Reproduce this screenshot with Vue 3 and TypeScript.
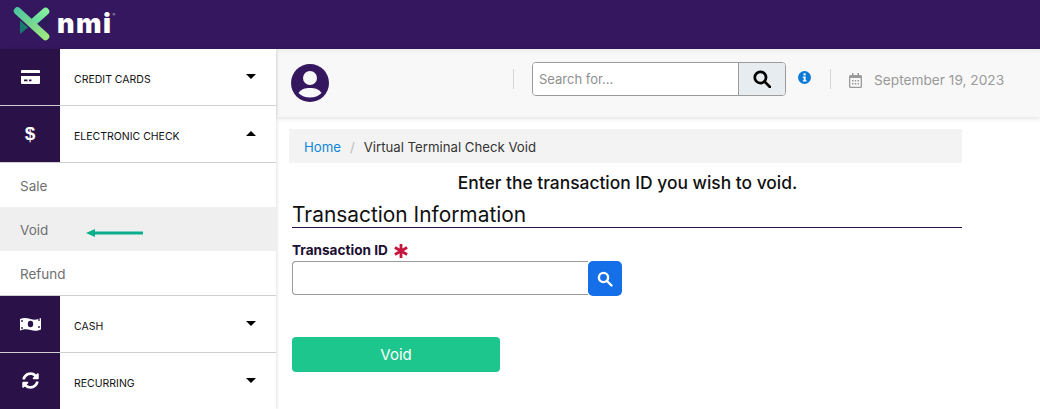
<script setup lang="ts">
interface NavGroup {
  label: string
  icon: 'card' | 'dollar' | 'cash' | 'sync'
  open?: boolean
  links?: string[]
}

const groups: NavGroup[] = [
  { label: 'CREDIT CARDS', icon: 'card' },
  { label: 'ELECTRONIC CHECK', icon: 'dollar', open: true, links: ['Sale', 'Void', 'Refund'] },
  { label: 'CASH', icon: 'cash' },
  { label: 'RECURRING', icon: 'sync' }
]
</script>

<template>
  <div class="page">
    <header class="topbar">
      <svg class="logo" width="37" height="34" viewBox="0 0 37 34">
        <defs>
          <linearGradient id="logoBar" x1="0" y1="0" x2="0" y2="1">
            <stop offset="0" stop-color="#45c2a3" />
            <stop offset="1" stop-color="#c4ec78" />
          </linearGradient>
          <linearGradient id="logoA" x1="0" y1="0" x2="37" y2="34" gradientUnits="userSpaceOnUse">
            <stop offset="0" stop-color="#45c2a3" />
            <stop offset="1" stop-color="#a8ec7e" />
          </linearGradient>
          <linearGradient id="logoB" x1="36" y1="2" x2="20" y2="18" gradientUnits="userSpaceOnUse">
            <stop offset="0" stop-color="#8cf59c" />
            <stop offset="1" stop-color="#5ed6a0" />
          </linearGradient>
        </defs>
        <path d="M32.500 4.500 L20 15.500" stroke="url(#logoB)" stroke-width="7.500" stroke-linecap="round" />
        <path d="M4.500 4 L32.500 29.500" stroke="url(#logoA)" stroke-width="7.500" stroke-linecap="round" />
        <path d="M3.500 4.500 V29.500" stroke="url(#logoBar)" stroke-width="7" stroke-linecap="round" />
        <path d="M7 13.500 15 20.500 7 27Z" fill="#177a6c" />
        <path d="M27 16 36 10V22.500Z" fill="#2b1a57" />
      </svg>
      <span class="wordmark">nmi</span>
      <sup class="reg">®</sup>
    </header>

    <div class="body">
      <nav class="sidebar">
        <template v-for="group in groups" :key="group.label">
          <div class="group">
            <div class="group-icon">
              <svg v-if="group.icon === 'card'" width="19" height="14" viewBox="0 0 19 14" fill="#fff">
                <path d="M1 0h17a1 1 0 0 1 1 1v2H0V1a1 1 0 0 1 1-1Z" />
                <path fill-rule="evenodd" d="M0 6h19v7a1 1 0 0 1-1 1H1a1 1 0 0 1-1-1Zm3 3.500v1.800h3.500V9.500Zm5 0v1.800h2.500V9.500Z" />
              </svg>
              <span v-else-if="group.icon === 'dollar'" class="dollar">$</span>
              <svg v-else-if="group.icon === 'cash'" width="21" height="14" viewBox="0 0 21 14">
                <path d="M0 2C4 .5 7 1 10.500 2s6.500 1 10.500-1v11.500c-4 1.800-7 1.500-10.500.5S4 12 0 13.500Z" fill="#fff" />
                <ellipse cx="10.500" cy="7" rx="2.700" ry="3.300" fill="#2a1248" />
                <circle cx="2" cy="4" r="0.900" fill="#2a1248" />
                <circle cx="19" cy="3" r="0.900" fill="#2a1248" />
                <circle cx="2" cy="11" r="0.900" fill="#2a1248" />
                <circle cx="19" cy="10" r="0.900" fill="#2a1248" />
              </svg>
              <svg v-else width="17" height="17" viewBox="0 0 512 512" fill="#fff">
                <path d="M370.720 133.280C339.458 104.008 298.888 87.962 255.848 88c-77.458.068-144.328 53.178-162.791 126.850-1.344 5.363-6.122 9.150-11.651 9.150H24.103c-7.498 0-13.194-6.807-11.807-14.176C33.933 94.924 134.813 8 256 8c66.448 0 126.791 26.136 171.315 68.685L463.030 40.970C478.149 25.851 504 36.559 504 57.941V192c0 13.255-10.745 24-24 24H345.941c-21.382 0-32.090-25.851-16.971-40.971l41.750-41.749zM32 296h134.059c21.382 0 32.090 25.851 16.971 40.971l-41.750 41.750c31.262 29.273 71.835 45.319 114.876 45.280 77.418-.070 144.315-53.144 162.787-126.849 1.344-5.363 6.122-9.150 11.651-9.150h57.304c7.498 0 13.194 6.807 11.807 14.176C478.067 417.076 377.187 504 256 504c-66.448 0-126.791-26.136-171.315-68.685L48.970 471.030C33.851 486.149 8 475.441 8 454.059V320c0-13.255 10.745-24 24-24z" />
              </svg>
            </div>
            <span class="group-label">{{ group.label }}</span>
            <span class="caret" :class="{ up: group.open }"></span>
          </div>
          <div v-if="group.links" class="links">
            <a v-for="link in group.links" :key="link" class="link" :class="{ active: link === 'Void' }">
              {{ link }}
              <svg v-if="link === 'Void'" class="arrow" width="57" height="8" viewBox="0 0 57 8">
                <path d="M0 4 9 0v2.500h48v3H9V8Z" fill="#0aae8c" />
              </svg>
            </a>
          </div>
        </template>
      </nav>

      <main class="main">
        <div class="toolbar">
          <svg class="avatar" width="38" height="38" viewBox="0 0 38 38">
            <circle cx="19" cy="19" r="19" fill="#35175f" />
            <circle cx="19" cy="14" r="7" fill="#f8f8f8" />
            <path d="M7.500 29C10 25 14 24 19 24s9 1 11.500 5C27.500 32 23.500 33.500 19 33.500S10.500 32 7.500 29Z" fill="#f8f8f8" />
          </svg>
          <div class="tools">
            <div class="divider first"></div>
            <div class="search">
              <input class="search-input" type="text" placeholder="Search for..." />
              <button class="search-btn" type="button">
                <svg width="18" height="18" viewBox="0 0 17 17" fill="none" stroke="#000" stroke-width="2.600">
                  <circle cx="7" cy="7" r="5.300" />
                  <path d="M11 11l5 5" stroke-linecap="round" />
                </svg>
              </button>
            </div>
            <svg class="info" width="13" height="13" viewBox="0 0 14 14">
              <circle cx="7" cy="7" r="7" fill="#0d79d6" />
              <rect x="6" y="2.500" width="2.200" height="2.200" fill="#fff" />
              <path d="M5.200 6h3v4h1v1.300H5.200V10h1V7.300h-1Z" fill="#fff" />
            </svg>
            <div class="divider last"></div>
            <svg class="calendar" width="13" height="15" viewBox="0 0 13 15" fill="#9a9a9a">
              <path fill-rule="evenodd" d="M3 0h1.500v2h4V0H10v2h1.500A1.500 1.500 0 0 1 13 3.500v10a1.500 1.500 0 0 1-1.500 1.500h-10A1.500 1.500 0 0 1 0 13.500v-10A1.500 1.500 0 0 1 1.500 2H3Zm-1.700 5v8.300c0 .2.200.4.400.4h9.600c.2 0 .4-.2.400-.4V5ZM3 7h1.500v1.500H3Zm2.700 0h1.500v1.500H5.700Zm2.800 0H10v1.500H8.500ZM3 10h1.500v1.500H3Zm2.700 0h1.500v1.500H5.700Zm2.800 0H10v1.500H8.500Z" />
            </svg>
            <span class="date">September 19, 2023</span>
          </div>
        </div>

        <div class="content">
          <div class="breadcrumb">
            <a class="crumb-link">Home</a>
            <span class="crumb-sep">/</span>
            <span>Virtual Terminal Check Void</span>
          </div>
          <p class="intro">Enter the transaction ID you wish to void.</p>
          <h2 class="section">Transaction Information</h2>
          <label class="field-label">
            Transaction ID
            <svg class="req" width="14" height="14" viewBox="0 0 14 14" stroke="#c4173f" stroke-width="2.800">
              <path d="M7 0v14M.9 3.500l12.200 7M13.100 3.500.9 10.500" />
            </svg>
          </label>
          <div class="field">
            <input class="field-input" type="text" />
            <button class="field-btn" type="button">
              <svg width="16" height="16" viewBox="0 0 16 16" fill="none" stroke="#fff" stroke-width="2.400">
                <circle cx="6.500" cy="6.500" r="4.600" />
                <path d="M10 10l4.500 4.500" stroke-linecap="round" />
              </svg>
            </button>
          </div>
          <button class="submit" type="button">Void</button>
        </div>
      </main>
    </div>
  </div>
</template>

<style>
html,
body {
  margin: 0;
  background: #fff;
}
</style>

<style scoped>
.page {
  width: 1040px;
  height: 409px;
  overflow: hidden;
  font-family: "Inter", "Liberation Sans", sans-serif;
  display: flex;
  flex-direction: column;
}

.topbar {
  height: 49px;
  flex: none;
  background: #35175f;
  display: flex;
  align-items: center;
  padding: 0 0 2px 13px;
  box-sizing: border-box;
}

.logo {
  flex: none;
}

.wordmark {
  margin-left: 7px;
  font-family: "Inter", sans-serif;
  font-weight: 900;
  font-size: 27px;
  line-height: 30px;
  letter-spacing: 1.500px;
  color: #fff;
  padding-top: 1px;
}

.reg {
  font-size: 4px;
  color: #ccc;
  align-self: flex-start;
  margin: 12px 0 0 0;
}

.body {
  flex: 1;
  display: flex;
  min-height: 0;
}

.sidebar {
  width: 276px;
  margin-right: 1px;
  flex: none;
  background: #fff;
  box-shadow: 1px 0 3px rgba(0, 0, 0, 0.12);
  position: relative;
  z-index: 2;
}

.group {
  height: 57px;
  display: flex;
  align-items: center;
  border-bottom: 1px solid #cfcfcf;
  box-sizing: border-box;
}

.group-icon {
  width: 60px;
  height: 100%;
  flex: none;
  background: #2a1248;
  display: flex;
  align-items: center;
  justify-content: center;
  padding-bottom: 1px;
  box-sizing: border-box;
}

.dollar {
  color: #fff;
  font-family: "Liberation Sans", sans-serif;
  font-weight: 700;
  font-size: 19px;
  line-height: 20px;
}

.group-label {
  margin-left: 14px;
  flex: 1;
  font-size: 10.500px;
  color: #111;
  padding-top: 5px;
}

.caret {
  width: 0;
  height: 0;
  margin: 0 20px 2px 0;
  border-left: 5px solid transparent;
  border-right: 5px solid transparent;
  border-top: 5px solid #000;
}

.caret.up {
  border-top: 0;
  border-bottom: 5px solid #000;
}

.links {
  border-bottom: 1px solid #cfcfcf;
}

.link {
  height: 44px;
  display: flex;
  align-items: center;
  padding: 2px 0 0 20px;
  box-sizing: border-box;
  font-size: 13.500px;
  color: #6f6f6f;
  position: relative;
}

.link.active {
  background: #efefef;
}

.arrow {
  position: absolute;
  left: 86px;
  top: 22px;
}

.main {
  flex: 1;
  min-width: 0;
}

.toolbar {
  height: 68px;
  background: #f8f8f8;
  box-shadow: 0 1px 5px rgba(0, 0, 0, 0.14), inset 0 4px 4px -3px rgba(0, 0, 0, 0.08);
  display: flex;
  align-items: center;
  padding-left: 14px;
  box-sizing: border-box;
}

.avatar {
  flex: none;
}

.tools {
  display: flex;
  align-items: center;
  margin-bottom: 8px;
}

.divider {
  width: 1px;
  height: 20px;
  background: #d4d4d4;
  flex: none;
}

.divider.first {
  margin: 0 18px 0 184px;
}

.divider.last {
  margin: 0 18px 0 19px;
}

.search {
  display: flex;
  height: 34px;
  width: 254px;
  flex: none;
  box-sizing: border-box;
  border: 1px solid #9b9b9b;
  border-radius: 4px;
  overflow: hidden;
}

.search-input {
  flex: 1;
  min-width: 0;
  border: 0;
  outline: 0;
  padding: 0 6px;
  font: inherit;
  font-size: 13px;
  background: #fff;
}

.search-input::placeholder {
  color: #8f8f8f;
}

.search-btn {
  width: 47px;
  flex: none;
  border: 0;
  border-left: 1px solid #9b9b9b;
  background: #e7ecf1;
  display: flex;
  align-items: center;
  justify-content: center;
  padding: 0;
}

.info {
  flex: none;
  margin: -4px 0 0 12px;
}

.calendar {
  flex: none;
  margin-top: 2px;
}

.date {
  margin: 2px 0 0 12px;
  font-size: 13.700px;
  color: #9a9a9a;
  white-space: nowrap;
}

.content {
  padding: 12px 0 0 12px;
  width: 673px;
}

.breadcrumb {
  height: 34px;
  background: #f3f3f3;
  display: flex;
  align-items: center;
  padding: 2px 0 0 15px;
  box-sizing: border-box;
  font-size: 13.200px;
  color: #333;
}

.crumb-link {
  color: #0d85d8;
}

.crumb-sep {
  margin: 0 9px;
  color: #bbb;
}

.intro {
  margin: 10px 0 0;
  padding-left: 4px;
  text-align: center;
  font-size: 17.400px;
  line-height: 20px;
  font-weight: 500;
  color: #111;
}

.section {
  margin: 9px 0 0 3px;
  border-bottom: 1px solid #2a1248;
  font-size: 20.900px;
  line-height: 26px;
  font-weight: 400;
  color: #111;
  height: 26px;
  box-sizing: border-box;
}

.field-label {
  display: flex;
  align-items: center;
  gap: 6px;
  margin: 13px 0 0 3px;
  font-size: 13.600px;
  line-height: 18px;
  font-weight: 700;
  color: #1c0f33;
}

.req {
  flex: none;
  margin-top: 2px;
}

.field {
  display: flex;
  margin: 2px 0 0 3px;
}

.field-input {
  width: 296px;
  height: 34px;
  box-sizing: border-box;
  border: 1px solid #9b9b9b;
  border-right: 0;
  border-radius: 4px 0 0 4px;
  outline: 0;
  background: #fff;
}

.field-btn {
  width: 34px;
  height: 35px;
  flex: none;
  border: 0;
  padding: 0;
  background: #156fe8;
  border-radius: 5px;
  display: flex;
  align-items: center;
  justify-content: center;
}

.submit {
  display: block;
  margin: 41px 0 0 3px;
  width: 208px;
  height: 35px;
  border: 0;
  border-radius: 4px;
  background: #1dc68c;
  color: #fff;
  font: inherit;
  font-size: 15px;
}
</style>
